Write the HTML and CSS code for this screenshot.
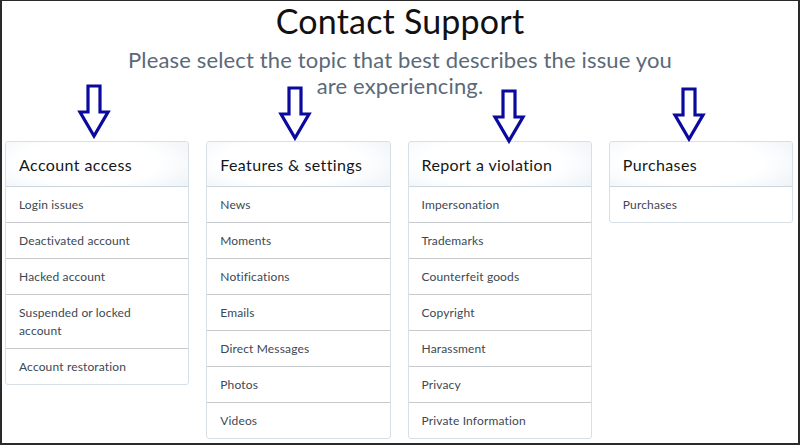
FILE: index.html
```html
<!DOCTYPE html>
<html>
<head>
<meta charset="utf-8">
<link rel="stylesheet" href="styles.css">
</head>
<body>
<div class="frame">
  <header class="intro">
    <h1 class="title">Contact Support</h1>
    <p class="subtitle">Please select the topic that best describes the issue you are experiencing.</p>
  </header>
  <div class="cards">
    <section class="card">
      <h2 class="card-head">Account access</h2>
      <ul class="list">
        <li>Login issues</li>
        <li>Deactivated account</li>
        <li>Hacked account</li>
        <li>Suspended or locked account</li>
        <li>Account restoration</li>
      </ul>
    </section>
    <section class="card">
      <h2 class="card-head">Features &amp; settings</h2>
      <ul class="list">
        <li>News</li>
        <li>Moments</li>
        <li>Notifications</li>
        <li>Emails</li>
        <li>Direct Messages</li>
        <li>Photos</li>
        <li>Videos</li>
      </ul>
    </section>
    <section class="card">
      <h2 class="card-head">Report a violation</h2>
      <ul class="list">
        <li>Impersonation</li>
        <li>Trademarks</li>
        <li>Counterfeit goods</li>
        <li>Copyright</li>
        <li>Harassment</li>
        <li>Privacy</li>
        <li>Private Information</li>
      </ul>
    </section>
    <section class="card">
      <h2 class="card-head">Purchases</h2>
      <ul class="list">
        <li>Purchases</li>
      </ul>
    </section>
  </div>
  <svg class="arrow a1" width="34" height="55" viewBox="0 0 34 55"><polygon points="11,2 23,2 23,28 31,28 17,52 3,28 11,28"/></svg>
  <svg class="arrow a2" width="34" height="55" viewBox="0 0 34 55"><polygon points="11,2 23,2 23,28 31,28 17,52 3,28 11,28"/></svg>
  <svg class="arrow a3" width="34" height="55" viewBox="0 0 34 55"><polygon points="11,2 23,2 23,28 31,28 17,52 3,28 11,28"/></svg>
  <svg class="arrow a4" width="34" height="55" viewBox="0 0 34 55"><polygon points="11,2 23,2 23,28 31,28 17,52 3,28 11,28"/></svg>
</div>
</body>
</html>
```

FILE: styles.css
```css
html, body {
  margin: 0;
  padding: 0;
  background: #fff;
}
.frame {
  position: relative;
  box-sizing: border-box;
  width: 800px;
  height: 445px;
  overflow: hidden;
  border-top: 1px solid #2a2a2a;
  border-left: 2px solid #2a2a2a;
  border-right: 2px solid #2a2a2a;
  border-bottom: 2px solid #2a2a2a;
  font-family: Lato, "Open Sans", sans-serif;
}
.intro {
  text-align: center;
}
.title {
  margin: 0;
  padding-top: 1px;
  font-size: 34px;
  line-height: 38px;
  font-weight: 400;
  letter-spacing: 0.2px;
  color: #111;
}
.subtitle {
  margin: 7px auto 0;
  width: 560px;
  font-size: 22px;
  line-height: 26px;
  letter-spacing: 0.15px;
  color: #5a6a78;
  font-weight: 400;
}
.cards {
  display: grid;
  grid-template-columns: repeat(4, 1fr);
  gap: 17px;
  align-items: start;
  margin-top: 42px;
  padding-left: 3px;
  width: 788px;
}
.card {
  border: 1px solid #d8e0e7;
  border-radius: 3px;
  overflow: hidden;
}
.card-head {
  margin: 0;
  height: 45px;
  box-sizing: border-box;
  padding: 0 13px;
  display: flex;
  align-items: center;
  font-size: 16px;
  letter-spacing: 0.4px;
  font-weight: 400;
  color: #14171a;
  background: radial-gradient(ellipse 70% 90% at 45% 45%, #ffffff 55%, #eef3f8 100%);
  border-bottom: 1px solid #ccd6df;
}
.list {
  list-style: none;
  margin: 0;
  padding: 0;
}
.list li {
  padding: 9px 18px 8px 13px;
  min-height: 18px;
  font-size: 12px;
  line-height: 18px;
  letter-spacing: 0.15px;
  color: #3c4853;
  border-top: 1px solid #c6cacd;
}
.list li:first-child {
  border-top: none;
}
.arrow {
  position: absolute;
}
.arrow polygon {
  fill: none;
  stroke: #0a0a9e;
  stroke-width: 3.2;
  stroke-linejoin: miter;
}
.a1 { left: 75px; top: 83px; }
.a2 { left: 276px; top: 85px; }
.a3 { left: 490px; top: 88px; }
.a4 { left: 670px; top: 86px; }
```
